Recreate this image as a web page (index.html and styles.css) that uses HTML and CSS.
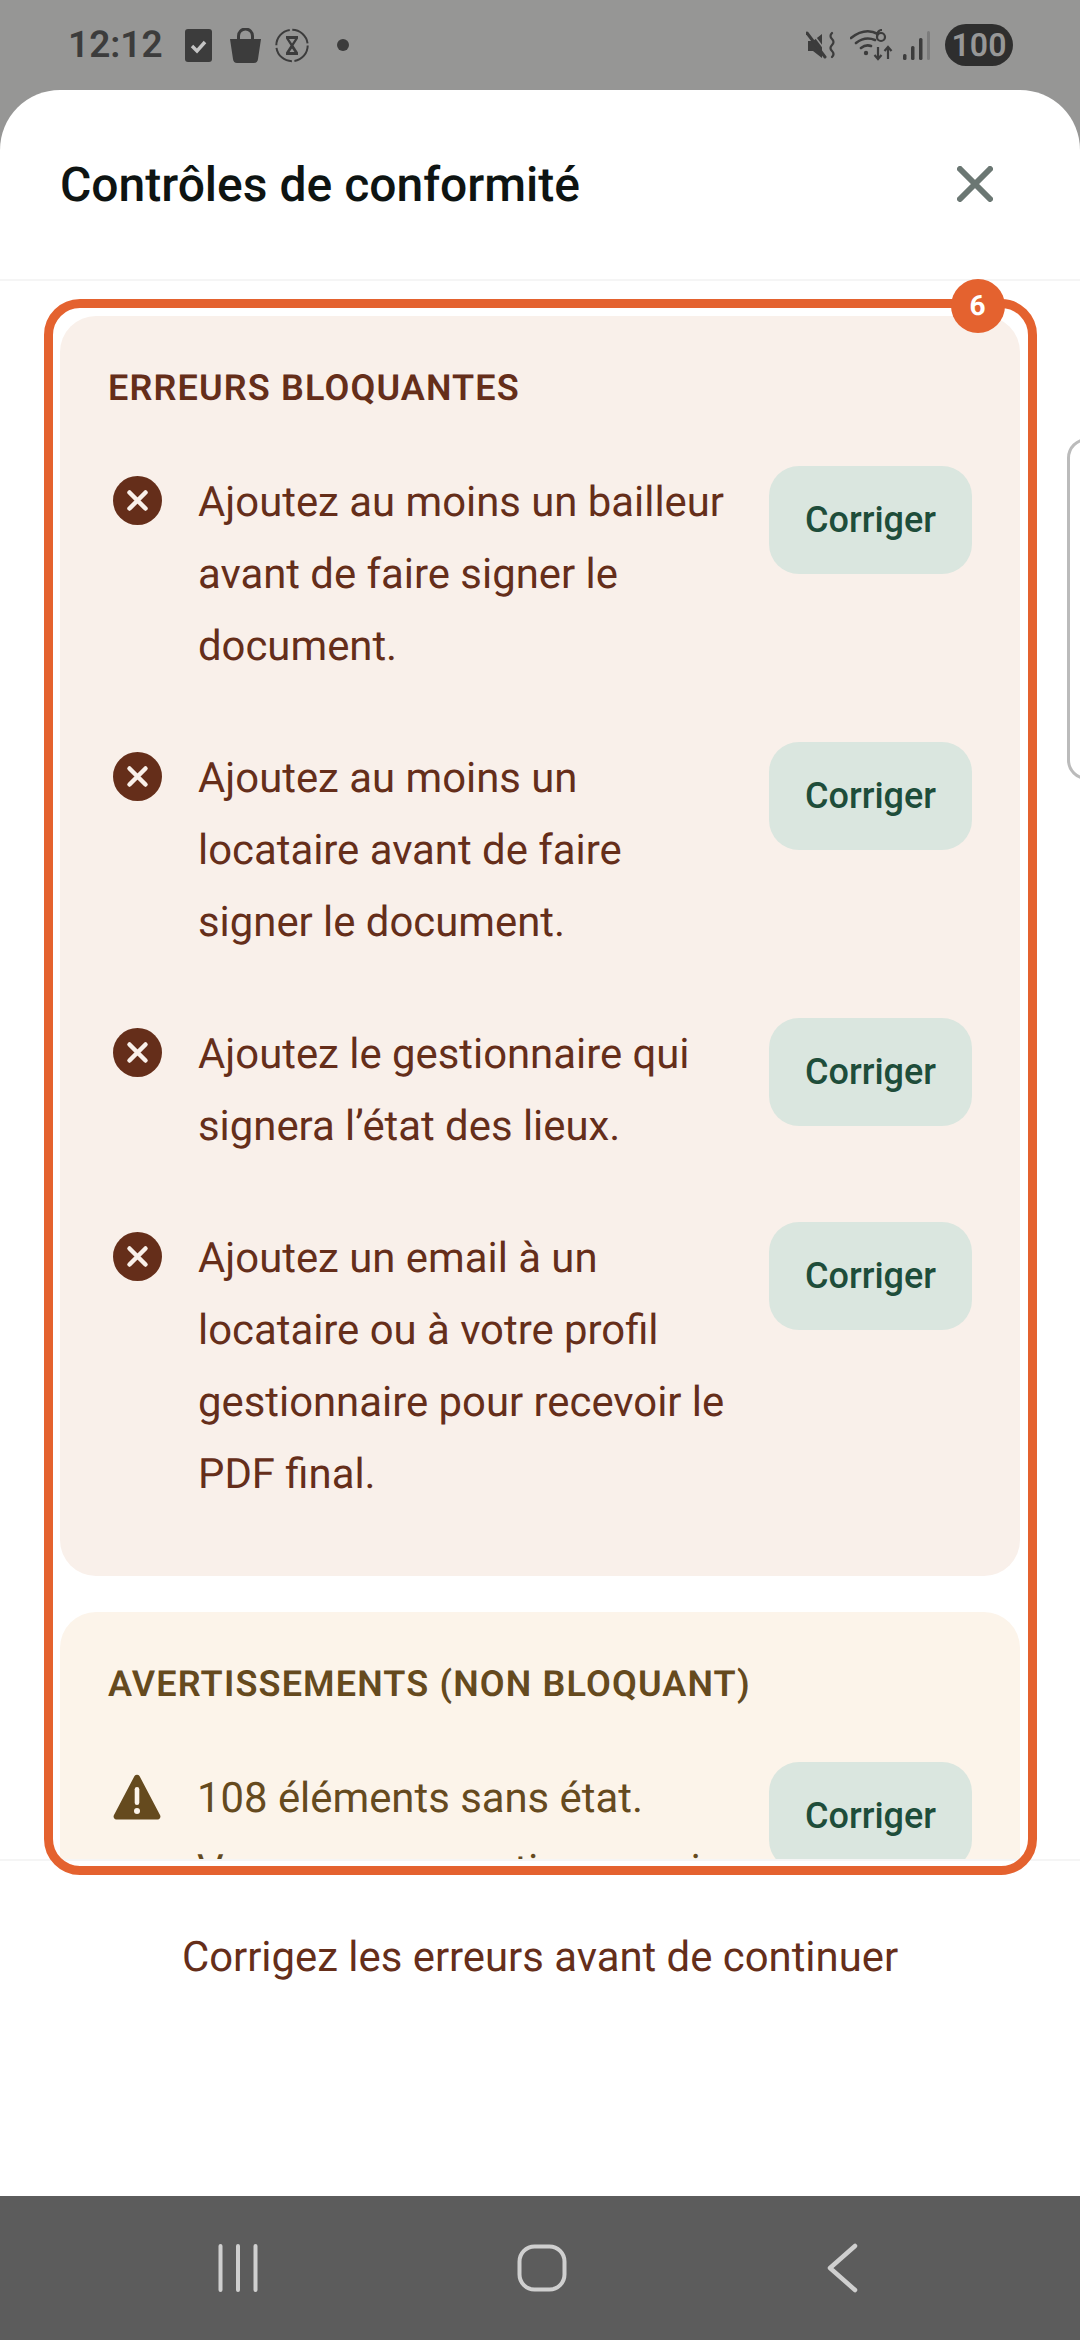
FILE: index.html
```html
<!DOCTYPE html>
<html lang="fr">
  <head>
    <meta charset="UTF-8" />
    <meta name="viewport" content="width=device-width, initial-scale=1.0" />
    <title>Contrôles de conformité</title>
    <link rel="stylesheet" href="styles.css">
  </head>
  <body>
    <div class="phone">
      <!-- Status bar -->
      <div class="status">
        <span class="time">12:12</span>
        <svg class="ic-check" width="27" height="33" viewBox="0 0 27 33">
          <rect width="27" height="33" rx="3" fill="#3c3c3c" />
          <path d="M7 17l5 5 8-9" fill="none" stroke="#c4c4c4" stroke-width="3.4" />
        </svg>
        <svg class="ic-bag" width="33" height="35" viewBox="0 0 33 35">
          <path d="M1 11h31l-3 20q-.5 4-4 4H8q-3.500 0-4-4z" fill="#3c3c3c" />
          <path d="M9.500 12V8a7 7 0 0 1 14 0v4" fill="none" stroke="#3c3c3c" stroke-width="3" />
        </svg>
        <svg class="ic-timer" width="34" height="35" viewBox="0 0 34 35">
          <circle cx="17" cy="17.500" r="15.700" fill="none" stroke="#3c3c3c" stroke-width="2" stroke-dasharray="22 2.600" />
          <path d="M11 8h12v2.500l-4.500 7 4.500 7V27H11v-2.500l4.500-7-4.500-7z" fill="#3c3c3c" />
          <path d="M14 11h6l-3 4.500zM14.500 24l2.500-3.500 2.500 3.500z" fill="#969695" />
        </svg>
        <span class="dot"></span>
        <span class="status-right">
          <svg width="30" height="29" viewBox="0 0 30 29">
            <path d="M2 10h5l9-7v24l-9-7H2z" fill="#3c3c3c" />
            <path d="M1 2l18 24" stroke="#3c3c3c" stroke-width="3" stroke-linecap="round" />
            <path d="M1 0l18 24" stroke="#969695" stroke-width="1.500" transform="translate(3 -1)" />
            <path d="M26 2q-3 3 0 6t0 6 0 6 0 6" fill="none" stroke="#3c3c3c" stroke-width="2.200" stroke-linecap="round" />
          </svg>
          <svg class="ic-wifi" width="43" height="32" viewBox="0 0 43 32">
            <path d="M1 9Q15-2 28 5M6 14q9-7 19-3M11 19q5-4 10-2" fill="none" stroke="#3c3c3c" stroke-width="2.600" stroke-linecap="round" />
            <circle cx="16" cy="24" r="2.200" fill="#3c3c3c" />
            <circle cx="31" cy="8" r="4" fill="none" stroke="#3c3c3c" stroke-width="2.200" />
            <path d="M27 8q0-7 5-7M28 18v12m-3.500-4l3.500 4 3.500-4M38 30V18m-3.500 4l3.500-4 3.500 4" fill="none" stroke="#3c3c3c" stroke-width="2.200" />
          </svg>
          <svg class="ic-signal" width="27" height="29" viewBox="0 0 27 29">
            <rect x="0" y="23" width="3.500" height="6" rx="1.500" fill="#3c3c3c" />
            <rect x="8" y="15" width="3.500" height="14" rx="1.500" fill="#3c3c3c" />
            <rect x="16" y="7" width="3.500" height="22" rx="1.500" fill="#3c3c3c" />
            <rect x="24" y="0" width="3" height="29" rx="1.500" fill="#7c7c7c" />
          </svg>
          <span class="battery">100</span>
        </span>
      </div>

      <div class="sheet">
        <div class="sheet-head">
          <h1>Contrôles de conformité</h1>
          <svg class="close" width="36" height="36" viewBox="0 0 36 36">
            <path d="M3 3l30 30M33 3L3 33" stroke="#6b7773" stroke-width="6" stroke-linecap="round" />
          </svg>
        </div>

        <div class="sheet-body">
          <section class="card errors">
            <h2>Erreurs bloquantes</h2>
            <div class="item">
              <svg class="item-icon" width="49" height="49" viewBox="0 0 49 49">
                <circle cx="24.500" cy="24.500" r="24.500" fill="#652e1a" />
                <path d="M16.500 16.500l16 16M32.500 16.500l-16 16" stroke="#f9f0ea" stroke-width="4.500" stroke-linecap="round" />
              </svg>
              <p>Ajoutez au moins un bailleur avant de faire signer le document.</p>
              <button class="fix">Corriger</button>
            </div>
            <div class="item">
              <svg class="item-icon" width="49" height="49" viewBox="0 0 49 49">
                <circle cx="24.500" cy="24.500" r="24.500" fill="#652e1a" />
                <path d="M16.500 16.500l16 16M32.500 16.500l-16 16" stroke="#f9f0ea" stroke-width="4.500" stroke-linecap="round" />
              </svg>
              <p>Ajoutez au moins un locataire avant de faire signer le document.</p>
              <button class="fix">Corriger</button>
            </div>
            <div class="item">
              <svg class="item-icon" width="49" height="49" viewBox="0 0 49 49">
                <circle cx="24.500" cy="24.500" r="24.500" fill="#652e1a" />
                <path d="M16.500 16.500l16 16M32.500 16.500l-16 16" stroke="#f9f0ea" stroke-width="4.500" stroke-linecap="round" />
              </svg>
              <p>Ajoutez le gestionnaire qui signera l’état des lieux.</p>
              <button class="fix">Corriger</button>
            </div>
            <div class="item">
              <svg class="item-icon" width="49" height="49" viewBox="0 0 49 49">
                <circle cx="24.500" cy="24.500" r="24.500" fill="#652e1a" />
                <path d="M16.500 16.500l16 16M32.500 16.500l-16 16" stroke="#f9f0ea" stroke-width="4.500" stroke-linecap="round" />
              </svg>
              <p>Ajoutez un email à un locataire ou à votre profil gestionnaire pour recevoir le PDF final.</p>
              <button class="fix">Corriger</button>
            </div>
          </section>

          <section class="card warnings">
            <h2>Avertissements (non bloquant)</h2>
            <div class="item">
              <svg class="item-icon warn-icon" width="48" height="46" viewBox="0 0 48 46">
                <path d="M21.500 2a3 3 0 0 1 5 0l20.500 39a3 3 0 0 1-2.500 4.500h-41A3 3 0 0 1 1 41z" fill="#654a1e" />
                <rect x="21.700" y="13" width="4.600" height="18" rx="2.300" fill="#fcf4ea" />
                <circle cx="24" cy="37" r="3" fill="#fcf4ea" />
              </svg>
              <p>108 éléments sans état. Vous pouvez continuer mais</p>
              <button class="fix">Corriger</button>
            </div>
          </section>

          <!-- Edge of the next page peeking in -->
          <div class="peek"></div>
        </div>

        <div class="sheet-foot">Corrigez les erreurs avant de continuer</div>

        <!-- Highlight frame drawn over the list -->
        <div class="frame"><span class="frame-count">6</span></div>
      </div>

      <!-- Navigation bar -->
      <div class="nav">
        <svg width="40" height="48" viewBox="0 0 40 48">
          <path d="M2.500 2v44M20 2v44M37.500 2v44" stroke="#cfcfcf" stroke-width="4" stroke-linecap="round" />
        </svg>
        <svg width="50" height="48" viewBox="0 0 50 48">
          <rect x="2.500" y="2.500" width="45" height="43" rx="15" fill="none" stroke="#cfcfcf" stroke-width="4" />
        </svg>
        <svg width="32" height="50" viewBox="0 0 32 50">
          <path d="M29 3L4 25l25 22" fill="none" stroke="#cfcfcf" stroke-width="4.500" stroke-linecap="round" stroke-linejoin="round" />
        </svg>
      </div>
    </div>
  </body>
</html>
```

FILE: styles.css
```css
* {
  box-sizing: border-box;
}
body {
  margin: 0;
  background: #969695;
  font-family: Roboto, sans-serif;
  text-rendering: geometricPrecision;
}
h1,
h2,
p {
  margin: 0;
}
.phone {
  display: flex;
  flex-direction: column;
  width: 1080px;
  height: 2340px;
  overflow: hidden;
}

/* Status bar */
.status {
  display: flex;
  align-items: center;
  flex: none;
  height: 90px;
  padding: 20px 67px 20px 68px;
  color: #3c3c3c;
}
.time {
  width: 93px;
  margin-right: 24px;
  font-size: 37px;
  font-weight: 600;
  white-space: nowrap;
}
.ic-bag {
  margin-left: 17px;
}
.ic-timer {
  margin-left: 13px;
}
.dot {
  width: 12px;
  height: 12px;
  margin-left: 28px;
  border-radius: 50%;
  background: #3c3c3c;
}
.status-right {
  display: flex;
  align-items: center;
  margin-left: auto;
}
.ic-wifi {
  margin-left: 14px;
}
.ic-signal {
  margin-left: 10px;
}
.battery {
  width: 68px;
  height: 42px;
  margin-left: 15px;
  border-radius: 21px;
  background: #2e2e2e;
  color: #979797;
  font-size: 32px;
  font-weight: 600;
  line-height: 42px;
  text-align: center;
}

/* Sheet */
.sheet {
  position: relative;
  display: flex;
  flex-direction: column;
  flex: 1;
  min-height: 0;
  background: #fff;
  border-radius: 60px 60px 0 0;
}
.sheet-head {
  display: flex;
  align-items: center;
  justify-content: space-between;
  flex: none;
  height: 191px;
  padding: 0 87px 0 60px;
  border-bottom: 2px solid #f5f5f5;
}
h1 {
  color: #0e1412;
  font-size: 48px;
  font-weight: 500;
}
.close {
  margin-bottom: 2px;
}
.sheet-body {
  position: relative;
  flex: 1;
  min-height: 0;
  padding: 35px 60px 0;
  overflow: hidden;
}
.sheet-foot {
  flex: none;
  height: 337px;
  padding-top: 75px;
  border-top: 2px solid #f5f5f5;
  color: #652e1a;
  font-size: 41.850px;
  line-height: 44px;
  text-align: center;
}

/* Cards */
.card {
  margin-bottom: 36px;
  padding: 48px 48px 6px;
  border-radius: 36px;
}
.errors {
  background: #f9f0ea;
  color: #652e1a;
}
.warnings {
  background: #fcf4ea;
  color: #654a1e;
}
h2 {
  margin-bottom: 55px;
  padding-top: 1px;
  font-size: 36px;
  font-weight: 600;
  line-height: 46px;
  letter-spacing: 1.150px;
  text-transform: uppercase;
}
.item {
  display: flex;
  align-items: flex-start;
  margin-bottom: 60px;
}
.item-icon {
  flex: none;
  margin: 10px 36px 0 5px;
}
.warn-icon {
  margin-top: 12px;
}
.item p {
  flex: 1;
  margin-bottom: -1px;
  padding-top: 1px;
  font-size: 41.850px;
  line-height: 72px;
}
.fix {
  flex: none;
  width: 203px;
  height: 108px;
  margin-left: 36px;
  border: 0;
  border-radius: 30px;
  background: #dae6df;
  color: #1e4d3a;
  font-family: Roboto, sans-serif;
  font-size: 36px;
  font-weight: 500;
}
.peek {
  position: absolute;
  top: 157px;
  left: 1067px;
  width: 40px;
  height: 342px;
  border: 3px solid #bbb;
  border-radius: 24px;
}

/* Highlight frame */
.frame {
  position: absolute;
  top: 209px;
  left: 43.500px;
  width: 993px;
  height: 1576px;
  border: 9px solid #e4622f;
  border-radius: 36px;
}
.frame-count {
  position: absolute;
  top: -29px;
  right: 23px;
  width: 54px;
  height: 54px;
  border-radius: 50%;
  background: #e4622f;
  color: #fff;
  font-size: 28px;
  font-weight: 700;
  line-height: 54px;
  text-align: center;
}

/* Navigation bar */
.nav {
  display: flex;
  align-items: center;
  justify-content: space-between;
  flex: none;
  height: 144px;
  padding: 0 222px 0 218px;
  background: #5c5c5c;
}
```
